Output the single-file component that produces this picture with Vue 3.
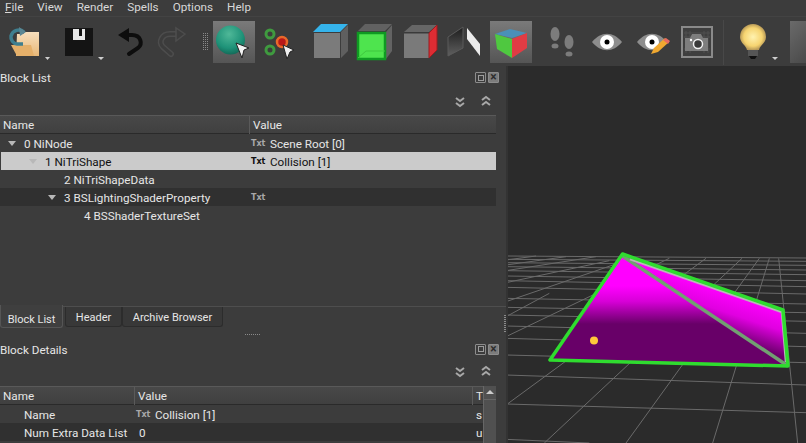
<script setup>
const menus = ['View', 'Render', 'Spells', 'Options', 'Help']
const treeRows = [
  { id: 0, label: '0 NiNode', indent: 24, arrow: 8, value: 'Scene Root [0]', txt: true },
  { id: 1, label: '1 NiTriShape', indent: 44, arrow: 28, value: 'Collision [1]', txt: true, selected: true },
  { id: 2, label: '2 NiTriShapeData', indent: 64, value: '' },
  { id: 3, label: '3 BSLightingShaderProperty', indent: 64, arrow: 48, value: '', txt: true, alt: true },
  { id: 4, label: '4 BSShaderTextureSet', indent: 84, value: '' }
]
const toZoom = (a, b, c, d) => ({ x1: 506 + a / 3, y1: 230 + b / 3, x2: 506 + c / 3, y2: 230 + d / 3 })
const gridLines = [
  [0, 78, 900, 84], [0, 88, 900, 94], [0, 98, 900, 106], [0, 110, 900, 120], [0, 122, 900, 134],
  [0, 138, 900, 152], [0, 152, 900, 170], [0, 172, 900, 192], [0, 205, 900, 222], [0, 232, 900, 248],
  [0, 255, 900, 274], [0, 288, 900, 310], [0, 325, 900, 350], [0, 375, 900, 398], [0, 435, 900, 465],
  [0, 522, 900, 548], [0, 628, 250, 639],
  [0, 90, 90, 78], [0, 105, 180, 80], [0, 122, 270, 80], [0, 158, 310, 92], [0, 215, 350, 95],
  [0, 320, 490, 85], [0, 525, 600, 85], [115, 639, 708, 85], [360, 639, 760, 85],
  [620, 639, 790, 85], [875, 639, 818, 85], [0, 260, 130, 190]
].map(l => toZoom(...l))
</script>

<template>
  <div class="app">
    <nav class="menubar">
      <span class="menu"><u>F</u>ile</span>
      <span v-for="m in menus" :key="m" class="menu">{{ m }}</span>
    </nav>

    <div class="toolbar">
      <svg width="56" height="50" viewBox="0 16 56 50">
        <defs>
          <linearGradient id="folder" x1="0" y1="0" x2="0" y2="1"><stop offset="0" stop-color="#f7dfbd"/><stop offset="1" stop-color="#e8b878"/></linearGradient>
        </defs>
        <path d="M17 33h6l2-2h14v24H16z" fill="url(#folder)"/>
        <path d="M11 44h20l3 11H17z" fill="#e5b06a"/>
        <path d="M24 31a8 8 0 0 0-13 4 7 7 0 0 0 6 8h6" fill="none" stroke="#3f7f8f" stroke-width="3.5"/>
        <path d="M19 26l7 5-6 4z" fill="#5b8794"/>
        <path d="M45 56h5l-2.500 3z" fill="#cfcfcf"/>
      </svg>
      <svg width="56" height="50" viewBox="56 16 56 50">
        <path d="M65 27h28v28H65z" fill="#141414"/>
        <path d="M73 28h12v11H73z" fill="#e8e8e8"/>
        <path d="M79 28h3v7h-3z" fill="#141414"/>
        <path d="M98 56h6l-3 3z" fill="#cfcfcf"/>
      </svg>
      <svg width="38" height="50" viewBox="112 16 38 50">
        <path d="M125 34h7c9 0 11 9 6 13l-9 6" fill="none" stroke="#0d0d0d" stroke-width="4" stroke-linecap="round"/>
        <path d="M118 34l11-7v14z" fill="#0d0d0d"/>
      </svg>
      <svg width="48" height="50" viewBox="150 16 48 50">
        <path d="M177 33h-7c-8 0-12 8-7 13l8 7" fill="none" stroke="#4d4d4d" stroke-width="6" stroke-linecap="round"/>
        <path d="M177 33h-7c-8 0-12 8-7 13l8 7" fill="none" stroke="#3c3c3c" stroke-width="3" stroke-linecap="round"/>
        <path d="M185 33l-9-6v13z" fill="#3c3c3c" stroke="#4d4d4d" stroke-width="1.500"/>
      </svg>
      <div class="grip"></div>
      <div class="checked">
        <svg width="42" height="42" viewBox="213 20 42 42">
          <defs>
            <radialGradient id="ball" cx="0.45" cy="0.3" r="0.8"><stop offset="0" stop-color="#4fb898"/><stop offset="0.6" stop-color="#1e9278"/><stop offset="1" stop-color="#0e5a4c"/></radialGradient>
          </defs>
          <circle cx="230.500" cy="39" r="14.500" fill="url(#ball)"/>
          <path d="M236 42l13 5-5 2-2 8z" fill="#f2f2f2" stroke="#222" stroke-width="1"/>
        </svg>
      </div>
      <svg width="51" height="50" viewBox="255 16 51 50">
        <circle cx="270" cy="33" r="4" fill="none" stroke="#3f9a3f" stroke-width="3"/>
        <circle cx="270" cy="49" r="4" fill="none" stroke="#3f9a3f" stroke-width="3"/>
        <circle cx="282" cy="41" r="5" fill="#b81818" stroke="#e8682a" stroke-width="2.500"/>
        <path d="M283 44l11 5-4 2-3 7z" fill="#efefef" stroke="#222" stroke-width="1"/>
      </svg>
      <svg width="46" height="50" viewBox="306 16 46 50">
        <path d="M313 31l8-8h27l-8 8z" fill="#35b4ec"/>
        <path d="M314 32h26v25h-26z" fill="#7b7b7b"/>
        <path d="M341 31l7-7v26l-7 7z" fill="#5f5f5f"/>
      </svg>
      <svg width="44" height="50" viewBox="352 16 44 50">
        <path d="M358 30l7-7h27l-7 7z" fill="#616161"/>
        <path d="M386 31l6-7v26l-6 8z" fill="#636363"/>
        <path d="M358 32h27v26h-27z" fill="#4ee44e" stroke="#0f9a22" stroke-width="2.500"/>
        <path d="M358 57l8-7h19" fill="none" stroke="#3fc83f" stroke-width="1"/>
      </svg>
      <svg width="46" height="50" viewBox="396 16 46 50">
        <path d="M404 31l8-7h25l-8 7z" fill="#666"/>
        <path d="M404 32h25v25h-25z" fill="#7a7a7a"/>
        <path d="M404 31h25v1.500h-25z" fill="#3a3a3a"/>
        <path d="M429 32l8-8v25l-8 8z" fill="#dd2c33" stroke="#9a1c20" stroke-width="1"/>
      </svg>
      <svg width="44" height="50" viewBox="442 16 44 50">
        <defs>
          <linearGradient id="flip" x1="0" y1="0" x2="0" y2="1"><stop offset="0" stop-color="#1d1d1d"/><stop offset="1" stop-color="#5f5f5f"/></linearGradient>
        </defs>
        <path d="M448 36l15-10v21l-15 8z" fill="url(#flip)" stroke="#5a5a5a" stroke-width="1"/>
        <path d="M467 27l13 16v12l-13-17z" fill="#ececec"/>
      </svg>
      <div class="checked checked-rgb">
        <svg width="42" height="42" viewBox="490 20 42 42">
          <path d="M495 33l15-5 17 4-15 5z" fill="#4a90b8"/>
          <path d="M495 33l17 5v19l-15-9z" fill="#4fc840"/>
          <path d="M512 38l15-6v15l-15 10z" fill="#e03c44"/>
        </svg>
      </div>
      <svg width="48" height="50" viewBox="532 16 48 50">
        <g fill="#7c7c7c">
          <ellipse cx="555" cy="33" rx="4.500" ry="7"/><ellipse cx="555" cy="45" rx="3.500" ry="2.500"/>
          <ellipse cx="569" cy="41" rx="4.500" ry="7"/><ellipse cx="569" cy="53" rx="3.500" ry="2.500"/>
        </g>
      </svg>
      <svg width="48" height="50" viewBox="580 16 48 50">
        <path d="M592 41c9-11 21-11 30 0-9 11-21 11-30 0z" fill="#8d8d8d"/>
        <circle cx="607" cy="41" r="7" fill="#fff"/><circle cx="607" cy="41" r="2.500" fill="#000"/>
      </svg>
      <svg width="48" height="50" viewBox="628 16 48 50">
        <path d="M637 41c9-11 21-11 30 0-9 11-21 11-30 0z" fill="#8d8d8d"/>
        <circle cx="652" cy="41" r="7" fill="#fff"/><circle cx="652" cy="41" r="2.500" fill="#000"/>
        <path d="M651 53l3-6 11-10 4 4-11 10z" fill="#f0a830"/>
        <path d="M663 39l3-2 4 3-2 3z" fill="#e86a60"/>
      </svg>
      <svg width="46" height="50" viewBox="676 16 46 50">
        <rect x="682" y="26" width="30" height="30" fill="#3f3f3f" stroke="#8a8a8a" stroke-width="2"/>
        <path d="M686 30v22M690 30v22M704 30v22M708 30v22M684 32h26M684 36h26M684 48h26" stroke="#505050" stroke-width="1"/>
        <path d="M685 37h5l2-4h9l2 4h5v13h-23z" fill="#7e7e7e"/>
        <circle cx="698" cy="43" r="4.500" fill="#3a3a3a" stroke="#f2f2f2" stroke-width="1.500"/>
        <circle cx="691" cy="39" r="1.200" fill="#fff"/>
      </svg>
      <svg width="68" height="50" viewBox="722 16 68 50">
        <defs>
          <radialGradient id="bulb"><stop offset="0" stop-color="#fff2b0"/><stop offset="0.7" stop-color="#f6d470"/><stop offset="1" stop-color="#b89a58"/></radialGradient>
        </defs>
        <path d="M723.500 19v45" stroke="#484848"/>
        <path d="M740 36a13 13 0 0 1 26 0c0 6-6 8-7 13h-12c-1-5-7-7-7-13z" fill="url(#bulb)"/>
        <path d="M748 49h10v6h-10z" fill="#555"/>
        <path d="M749 55h8l-2 3h-4z" fill="#101010"/>
        <path d="M772 56h6l-3 3z" fill="#cfcfcf"/>
      </svg>
      <div class="checked checked-last"></div>
    </div>

    <div class="body">
      <aside class="left">
        <div class="dock-head">
          <span class="dock-title">Block List</span>
          <span class="dock-btn"><span class="restore"></span></span>
          <span class="dock-btn dock-x">×</span>
        </div>
        <div class="chev-row">
          <svg class="chev" width="14" height="14" viewBox="0 0 14 14"><path d="M3 3l4 3 4-3M3 8l4 3 4-3" fill="none" stroke="#a8a8a8" stroke-width="2"/></svg>
          <svg class="chev chev-up" width="14" height="14" viewBox="0 0 14 14"><path d="M3 6l4-3 4 3M3 11l4-3 4 3" fill="none" stroke="#a8a8a8" stroke-width="2"/></svg>
        </div>
        <div class="tree">
          <div class="thead tree-cols">
            <span class="th">Name</span><span class="th th-sep">Value</span>
          </div>
          <div
            v-for="r in treeRows" :key="r.id"
            class="row tree-cols"
            :class="{ selected: r.selected, alt: r.alt }"
          >
            <span class="cell" :style="{ paddingLeft: r.indent + 'px' }">
              <i v-if="r.arrow" class="arrow" :style="{ left: r.arrow + 'px' }"></i>{{ r.label }}
            </span>
            <span class="cell cell-val"><b v-if="r.txt" class="txt">Txt</b>{{ r.value }}</span>
          </div>
        </div>
        <div class="tabs">
          <span class="tab active">Block List</span>
          <span class="tab tab-h">Header</span>
          <span class="tab tab-a">Archive Browser</span>
        </div>
        <div class="split-h"><span class="dots"></span></div>
        <div class="dock-head dock-head2">
          <span class="dock-title">Block Details</span>
          <span class="dock-btn"><span class="restore"></span></span>
          <span class="dock-btn dock-x">×</span>
        </div>
        <div class="chev-row chev-row2">
          <svg class="chev" width="14" height="14" viewBox="0 0 14 14"><path d="M3 3l4 3 4-3M3 8l4 3 4-3" fill="none" stroke="#a8a8a8" stroke-width="2"/></svg>
          <svg class="chev chev-up" width="14" height="14" viewBox="0 0 14 14"><path d="M3 6l4-3 4 3M3 11l4-3 4 3" fill="none" stroke="#a8a8a8" stroke-width="2"/></svg>
        </div>
        <div class="details">
          <div class="thead det-cols">
            <span class="th">Name</span><span class="th th-sep">Value</span><span class="th th-sep">T</span>
          </div>
          <div class="row det-cols">
            <span class="cell det-name">Name</span>
            <span class="cell cell-val"><b class="txt">Txt</b>Collision [1]</span>
            <span class="cell cell-t">s</span>
          </div>
          <div class="row det-cols alt">
            <span class="cell det-name">Num Extra Data List</span>
            <span class="cell cell-val cell-num">0</span>
            <span class="cell cell-t">u</span>
          </div>
          <div class="scroll"><span class="scroll-up"></span></div>
        </div>
      </aside>
      <div class="split-v"><span class="vdots"></span></div>
      <main class="viewport">
        <svg width="298" height="377" viewBox="508 66 298 377">
          <defs>
            <linearGradient id="triA" gradientUnits="userSpaceOnUse" x1="0" y1="286" x2="0" y2="324">
              <stop offset="0" stop-color="#ff00ff"/><stop offset="0.4" stop-color="#d800d8"/><stop offset="1" stop-color="#680068"/>
            </linearGradient>
            <linearGradient id="triB" gradientUnits="userSpaceOnUse" x1="722" y1="290" x2="708" y2="332">
              <stop offset="0" stop-color="#ff00ff"/><stop offset="0.45" stop-color="#e000e0"/><stop offset="1" stop-color="#6a006a"/>
            </linearGradient>
          </defs>
          <line v-for="(l, i) in gridLines" :key="i" v-bind="l" stroke="#6a6a6a" stroke-width="1"/>
          <path d="M622.500 254L783 310 788 366z" fill="url(#triB)"/>
          <path d="M622.500 254L550 360 788 366z" fill="url(#triA)"/>
          <path d="M622.500 256L788 366" stroke="#72a072" stroke-width="3.500"/>
          <path d="M630 259L782 312 786 362" fill="none" stroke="#b8b8b8" stroke-width="2.500"/>
          <path d="M622.500 254L550 360 788 366 783 310z" fill="none" stroke="#2fdc2f" stroke-width="3.500" stroke-linejoin="round"/>
          <circle cx="594" cy="340.500" r="4" fill="#ffc83a"/>
        </svg>
      </main>
    </div>
  </div>
</template>

<style>
html, body { margin: 0; background: #3c3c3c; }
</style>

<style scoped>
.app {
  width: 806px; height: 443px; overflow: hidden;
  display: flex; flex-direction: column;
  background: #3c3c3c; color: #e6e6e6;
  font: 11.7px/18px Roboto, sans-serif;
}
.menubar { height: 16px; display: flex; padding-left: 5px; gap: 14px; line-height: 15px; flex: none; }
.menu { color: #d8d8d8; }
.toolbar { height: 50px; flex: none; display: flex; align-items: center; border-top: 1px solid #434343; box-sizing: border-box; background: #3c3c3c; }
.toolbar svg { flex: none; display: block; }
.grip {
  width: 6px; height: 17px; margin: 0 4px 0 5px; flex: none;
  background:
    linear-gradient(90deg, transparent 50%, #3c3c3c 50%) 0 0 / 2px 2px,
    linear-gradient(#8a8a8a 50%, transparent 50%) 0 0 / 2px 2px;
}
.checked {
  width: 42px; height: 42px; flex: none;
  background: linear-gradient(#7a7a7a, #555);
}
.checked-rgb { margin-left: 4px; }
.checked-last { width: 16px; background: linear-gradient(135deg, #6a6a6a, #4a4a4a); }
.body { flex: 1; display: flex; min-height: 0; }
.left { width: 506px; flex: none; display: flex; flex-direction: column; background: #3c3c3c; }
.dock-head { height: 23px; display: flex; align-items: center; padding-right: 7px; box-sizing: border-box; gap: 2px; flex: none; }
.dock-title { flex: 1; padding-top: 1px; }
.dock-btn {
  width: 9px; height: 9px; border: 1px solid #8c8c8c; border-radius: 1px;
  display: flex; align-items: center; justify-content: center;
  font-size: 12px; line-height: 9px; color: #2d2d2d; font-weight: 700;
}
.dock-x { background: #7c7c7c; }
.restore { width: 4px; height: 4px; border: 1px solid #9c9c9c; display: block; }
.chev-row { height: 26px; display: flex; justify-content: flex-end; align-items: center; padding-right: 13px; gap: 12px; flex: none; }
.chev { display: block; }
.chev-up { margin-top: -3px; }
.tree { width: 496px; height: 191px; flex: none; }
.thead {
  height: 19px; box-sizing: border-box;
  background: linear-gradient(#484848, #404040);
  border-top: 1px solid #595959; border-bottom: 1px solid #2a2a2a;
  line-height: 18px;
}
.tree-cols { display: grid; grid-template-columns: 249px 247px; }
.th { padding-left: 3px; }
.th-sep { border-left: 1px solid #5a5a5a; }
.row { height: 18px; line-height: 20px; color: #e6e6e6; }
.row.alt { background: #303030; }
.row.selected { background: #cbcbcb; color: #111; margin-left: 1px; grid-template-columns: 248px 247px; }
.row.selected .txt { color: #111; }
.cell { position: relative; display: block; white-space: nowrap; overflow: hidden; box-sizing: border-box; }
.cell-val { padding-left: 2px; }
.cell-num { padding-left: 5px; }
.arrow {
  position: absolute; top: 7px; width: 0; height: 0;
  border-left: 4px solid transparent; border-right: 4px solid transparent; border-top: 5px solid #b8b8b8;
}
.txt {
  display: inline-block; width: 18px; font: 700 8px/12px "DejaVu Sans", sans-serif;
  color: #a8a8a8; vertical-align: 2px; margin-right: 1px;
}
.tabs { height: 22px; flex: none; display: flex; border-top: 1px solid #4e4e4e; box-sizing: border-box; }
.tab { height: 20px; line-height: 22px; font-size: 11px; box-sizing: border-box; border: 1px solid #2c2c2c; border-top: 0; text-align: center; border-radius: 0 0 3px 3px; background: #383838; }
.tab.active { width: 63px; height: 23px; background: #3f3f3f; border-color: #555; margin-top: -2px; line-height: 29px; }
.tab-h { width: 57px; margin-left: 2px; }
.tab-a { width: 101px; }
.split-h { height: 12px; flex: none; display: flex; justify-content: center; align-items: center; }
.dots { width: 16px; height: 1px; background-image: linear-gradient(90deg, #8a8a8a 50%, transparent 50%); background-size: 2px 1px; }
.dock-head2 { height: 18px; }
.chev-row2 { height: 28px; }
.details { position: relative; width: 496px; }
.det-cols { display: grid; grid-template-columns: 134px 338px 24px; }
.det-name { padding-left: 24px; }
.cell-t { padding-left: 4px; }
.scroll { position: absolute; right: 0; top: 0; width: 13px; height: 60px; background: #505050; border-left: 1px solid #666; box-sizing: border-box; }
.scroll-up { display: block; height: 13px; border-bottom: 1px solid #666; position: relative; }
.scroll-up::after { content: ""; position: absolute; left: 2px; top: 4px; border-left: 4px solid transparent; border-right: 4px solid transparent; border-bottom: 4px solid #ccc; }
.split-v { width: 2px; flex: none; position: relative; background: #333; }
.vdots { position: absolute; left: -2px; top: 249px; width: 2px; height: 17px; background-image: linear-gradient(#8a8a8a 50%, transparent 50%); background-size: 2px 2px; }
.viewport { flex: 1; background: #2b2b2b; overflow: hidden; }
.viewport svg { display: block; }
</style>
